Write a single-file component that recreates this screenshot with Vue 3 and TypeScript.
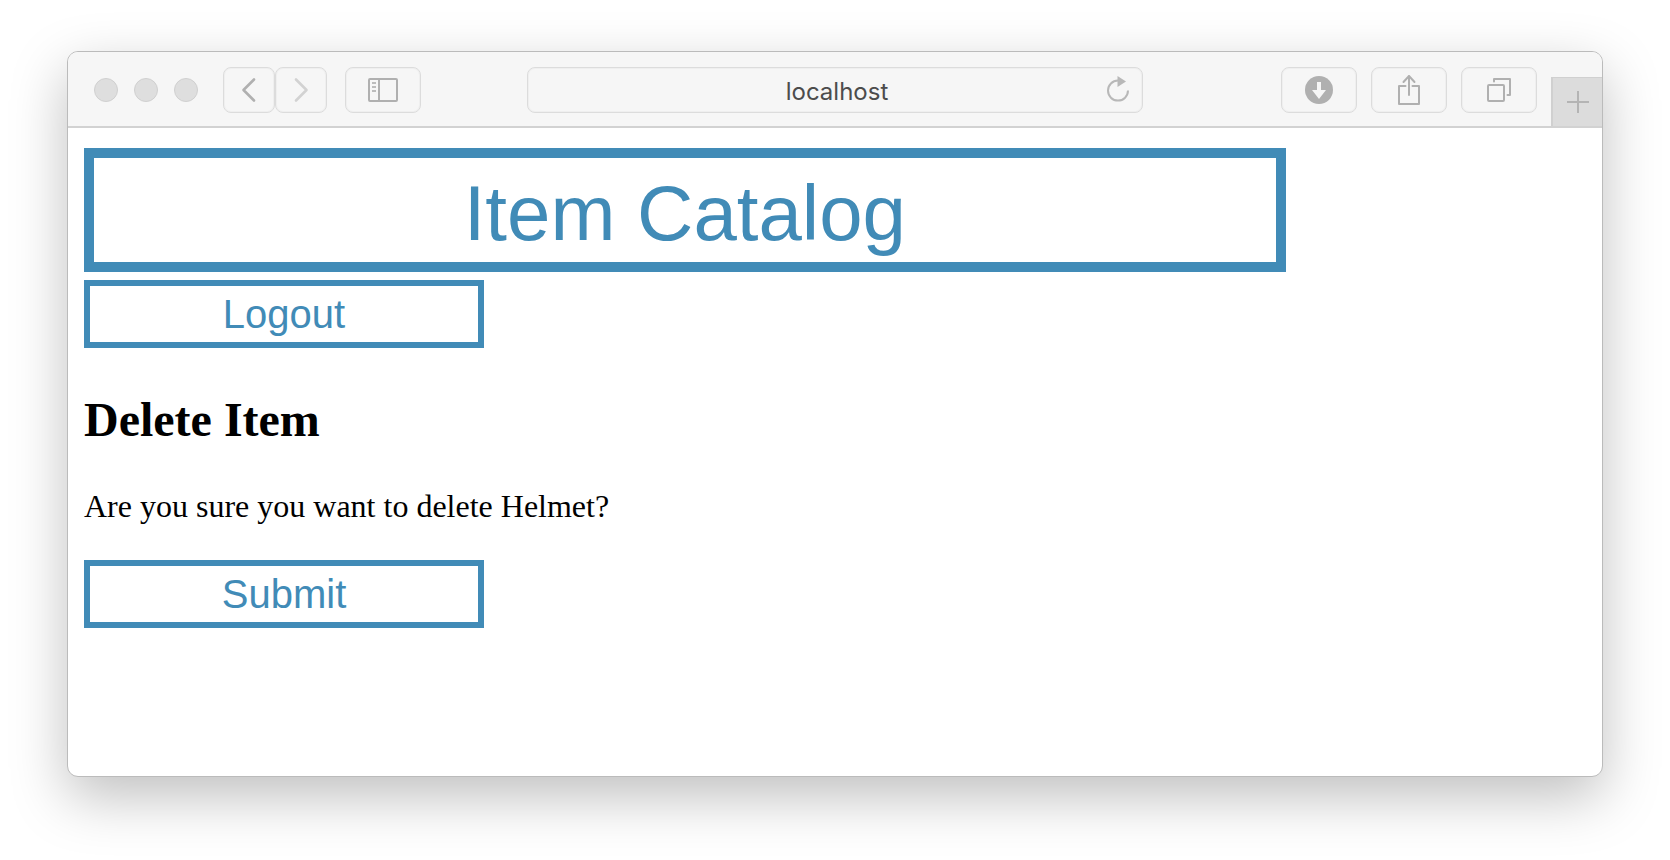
<script setup lang="ts">
import { ref } from 'vue'

const address = ref('localhost')
const itemName = ref('Helmet')
const lights = ['Close', 'Minimize', 'Zoom']
</script>

<template>
  <div class="stage">
    <div class="window">
      <header class="toolbar">
        <div class="group start">
          <div class="lights">
            <button v-for="name in lights" :key="name" class="light" type="button" :aria-label="name"></button>
          </div>
          <div class="nav">
            <button class="tool narrow" type="button" aria-label="Back">
              <svg width="16" height="26" viewBox="0 0 16 26"><path d="M13 2.5 2.5 13 13 23.5" fill="none" stroke="#b0b0b0" stroke-width="2.6" stroke-linecap="round" stroke-linejoin="round" /></svg>
            </button>
            <button class="tool narrow" type="button" aria-label="Forward">
              <svg width="16" height="26" viewBox="0 0 16 26"><path d="M3 2.5 13.5 13 3 23.5" fill="none" stroke="#d2d2d2" stroke-width="2.6" stroke-linecap="round" stroke-linejoin="round" /></svg>
            </button>
          </div>
          <button class="tool" type="button" aria-label="Show sidebar">
            <svg width="30" height="24" viewBox="0 0 30 24" fill="none" stroke="#b0b0b0" stroke-width="2">
              <rect x="1" y="1" width="28" height="22" rx="1" />
              <path d="M11 1v22" />
              <path d="M4 5h4M4 9h4M4 13h4" stroke="#bcbcbc" />
            </svg>
          </button>
        </div>

        <div class="address">
          <input v-model="address" type="text" aria-label="Address" spellcheck="false" />
          <button class="reload" type="button" aria-label="Reload">
            <svg width="24" height="28" viewBox="0 0 24 28">
              <path d="M12 5.6A10 10 0 1 0 22 15.6" fill="none" stroke="#b8b8b8" stroke-width="2" />
              <path d="M11.5 1v11l8.500-5.500z" fill="#b8b8b8" />
            </svg>
          </button>
        </div>

        <div class="group end">
          <button class="tool" type="button" aria-label="Downloads">
            <svg width="28" height="28" viewBox="0 0 28 28">
              <circle cx="14" cy="14" r="14" fill="#b0b0b0" />
              <path d="M12 6h4v8h5l-7 9-7-9h5z" fill="#f6f6f6" />
            </svg>
          </button>
          <button class="tool" type="button" aria-label="Share">
            <svg width="22" height="32" viewBox="0 0 22 32" fill="none" stroke="#b0b0b0" stroke-width="2" stroke-linecap="round" stroke-linejoin="round">
              <path d="M7.500 12H1v18h20V12h-6.500" />
              <path d="M11 21V2M5.500 8 11 2l5.500 6" />
            </svg>
          </button>
          <button class="tool" type="button" aria-label="Show all tabs">
            <svg width="24" height="24" viewBox="0 0 24 24" fill="none" stroke="#b0b0b0" stroke-width="2" stroke-linecap="round" stroke-linejoin="round">
              <rect x="1" y="7" width="16" height="16" rx="1" />
              <path d="M7 3.500V1h16v16h-2.500" />
            </svg>
          </button>
          <button class="newtab" type="button" aria-label="New tab">
            <svg width="22" height="22" viewBox="0 0 22 22"><path d="M11 0v22M0 11h22" stroke="#b4b4b4" stroke-width="2" /></svg>
          </button>
        </div>
      </header>

      <main class="page">
        <a class="title" href="#">Item Catalog</a>
        <button class="action" type="button">Logout</button>
        <h2>Delete Item</h2>
        <form @submit.prevent>
          <p>Are you sure you want to delete {{ itemName }}?</p>
          <button class="action" type="submit">Submit</button>
        </form>
      </main>
    </div>
  </div>
</template>

<style>
body {
  margin: 0;
  background: #fff;
}
</style>

<style scoped>
.stage {
  box-sizing: border-box;
  min-height: 100vh;
  padding: 51px 67px 83px;
  display: flex;
  overflow: hidden;
}
.window {
  flex: 1;
  min-width: 0;
  border: 1px solid #bbb;
  border-radius: 11px;
  background: #fff;
  box-shadow: 0 20px 56px rgba(0, 0, 0, 0.25);
}
button {
  padding: 0;
  border: 0;
  background: none;
}
svg {
  display: block;
}
.toolbar {
  box-sizing: border-box;
  height: 76px;
  padding-top: 2px;
  display: grid;
  grid-template-columns: 1fr minmax(0, 616px) 1fr;
  align-items: center;
  background: #f6f6f6;
  border-bottom: 2px solid #d2d2d2;
  border-radius: 10px 10px 0 0;
}
.group {
  height: 100%;
  display: flex;
  align-items: center;
}
.start {
  gap: 18px;
  padding-left: 26px;
}
.end {
  justify-content: flex-end;
  gap: 14px;
}
.lights {
  display: flex;
  gap: 16px;
  margin-right: 7px;
}
.light {
  width: 24px;
  height: 24px;
  border: 1px solid #d0d0d0;
  border-radius: 50%;
  background: #dedede;
}
.nav {
  display: flex;
}
.tool {
  box-sizing: border-box;
  width: 76px;
  height: 46px;
  display: flex;
  align-items: center;
  justify-content: center;
  border: 1px solid #dcdcdc;
  border-radius: 8px;
  box-shadow: inset 0 0 0 1px #efefef;
}
.narrow {
  width: 52px;
}
.address {
  position: relative;
  display: flex;
}
.address input {
  box-sizing: border-box;
  width: 100%;
  height: 46px;
  padding: 2px 38px 0 42px;
  border: 1px solid #dcdcdc;
  border-radius: 8px;
  outline: 0;
  background: transparent;
  box-shadow: inset 0 0 0 1px #efefef;
  color: #4c4c4c;
  text-align: center;
  font: 24px Inter, sans-serif;
}
.reload {
  position: absolute;
  right: 13px;
  top: 8px;
}
.newtab {
  box-sizing: border-box;
  width: 51px;
  align-self: flex-end;
  height: 49px;
  display: flex;
  align-items: center;
  justify-content: center;
  border: solid #d0d0d0;
  border-width: 1px 0 0 2px;
  background: #dcdcdc;
}
.page {
  padding: 20px 16px;
  color: #000;
  font: 32px/36px "Liberation Serif", serif;
}
.title,
.action {
  box-sizing: border-box;
  display: block;
  border: 6px solid #418bb7;
  background: #fff;
  color: #418bb7;
  text-align: center;
  text-decoration: none;
  font-family: "Liberation Sans", Arial, sans-serif;
}
.title {
  width: 80%;
  margin-bottom: 8px;
  padding-top: 6px;
  border-width: 10px;
  font-size: 78px;
  line-height: 98px;
}
.action {
  width: 400px;
  max-width: 100%;
  font-size: 40px;
  line-height: 56px;
}
h2 {
  margin: 44px 0 40px;
  font-size: 48px;
  line-height: 56px;
}
p {
  margin: 0 0 36px;
}
</style>
